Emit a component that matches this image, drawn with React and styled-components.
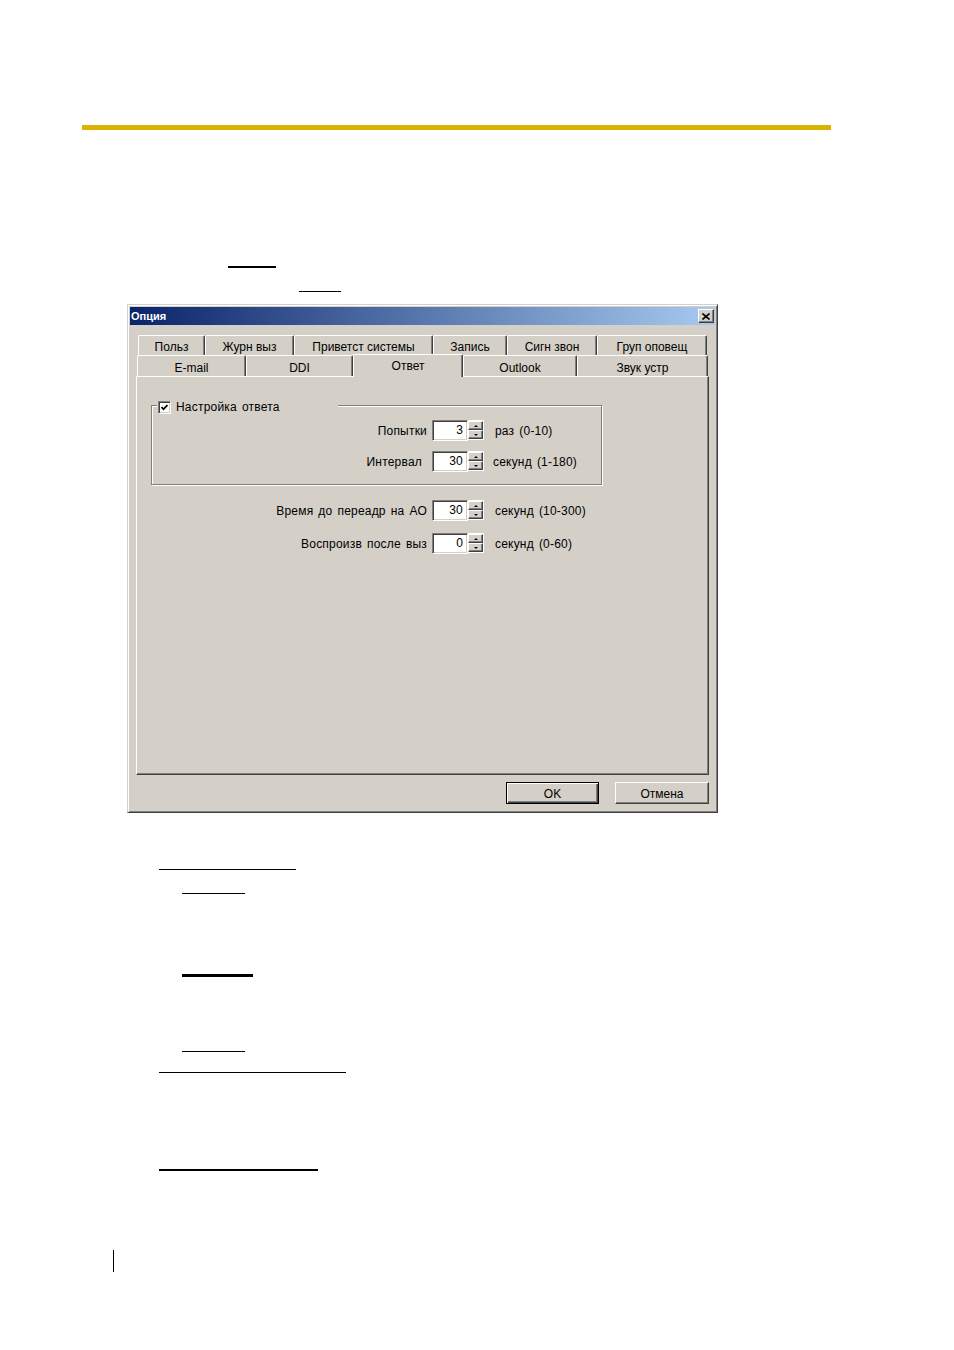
import React from 'react';
import styled, { createGlobalStyle, css } from 'styled-components';

const GlobalStyle = createGlobalStyle`
  body {
    margin: 0;
    background: #fff;
  }
`;

const Page = styled.div`
  width: 954px;
  min-height: 1350px;
  box-sizing: border-box;
  padding-top: 125px;
  background: #fff;
  display: flex;
  flex-direction: column;
  align-items: flex-start;
`;

const HeadRule = styled.div`
  margin-left: 82px;
  width: 749px;
  height: 5px;
  background: #dcb300;
`;

// blanked-out fields of the manual page, drawn as plain rules
const Blank = styled.span`
  display: block;
  margin-left: ${(p) => p.$x}px;
  margin-top: ${(p) => p.$gap}px;
  width: ${(p) => p.$w}px;
  height: ${(p) => p.$h || 1}px;
  background: #000;
`;

/* ---------- dialog ---------- */

const Window = styled.div`
  margin-left: 127px;
  margin-top: 12px;
  width: 591px;
  height: 509px;
  box-sizing: border-box;
  padding: 2px;
  background: #d4d0c8;
  border: 1px solid;
  border-color: #d4d0c8 #404040 #404040 #d4d0c8;
  box-shadow: inset 1px 1px #fff, inset -1px -1px #808080;
  display: flex;
  flex-direction: column;
  font-family: "Liberation Sans", Arial, sans-serif;
  font-size: 12px;
  color: #000;
`;

const TitleBar = styled.div`
  height: 18px;
  flex-shrink: 0;
  padding: 0 1px 0 1px;
  display: flex;
  align-items: center;
  justify-content: space-between;
  background: linear-gradient(to right, #0a246a, #a6caf0);
`;

const Title = styled.span`
  font-weight: bold;
  font-size: 11px;
  color: #fff;
`;

const CloseButton = styled.div`
  width: 16px;
  height: 14px;
  box-sizing: border-box;
  background: #d4d0c8;
  border: 1px solid;
  border-color: #fff #404040 #404040 #fff;
  box-shadow: inset -1px -1px #808080;
  display: flex;
  align-items: center;
  justify-content: center;
`;

const Body = styled.div`
  padding: 10px 6px 0 6px;
  display: flex;
  flex-direction: column;
`;

const TabRow = styled.div`
  display: flex;
  align-items: flex-start;
  height: ${(p) => p.$h}px;
  margin-left: ${(p) => p.$x}px;
`;

const Tab = styled.div`
  box-sizing: border-box;
  width: ${(p) => p.$w}px;
  height: 100%;
  padding-top: ${(p) => p.$top}px;
  line-height: 14px;
  text-align: center;
  white-space: nowrap;
  background: #d4d0c8;
  border-top: 1px solid #fff;
  border-left: 1px solid #fff;
  border-right: 1px solid #404040;
  border-radius: 2px 2px 0 0;
  box-shadow: inset -1px 0 #808080;

  ${(p) =>
    p.$selected &&
    css`
      position: relative;
      z-index: 1;
      height: calc(100% + 2px);
      margin-top: -1px;
      padding-top: 4px;
    `}
`;

const Panel = styled.div`
  height: 399px;
  box-sizing: border-box;
  padding: 28px 0 0 14px;
  border: 1px solid;
  border-color: #fff #404040 #404040 #fff;
  box-shadow: inset -1px -1px #808080;
  display: flex;
  flex-direction: column;
  align-items: flex-start;
  letter-spacing: 0.2px;
  word-spacing: 1.5px;
`;

const Group = styled.div`
  position: relative;
  width: 451px;
  box-sizing: border-box;
  padding: 14px 0 12px 0;
  border: 1px solid #808080;
  box-shadow: inset 1px 1px #fff, 1px 1px #fff;
  display: flex;
  flex-direction: column;
  gap: 10px;
`;

const Legend = styled.div`
  position: absolute;
  top: -6px;
  left: 5px;
  width: 180px;
  height: 14px;
  padding-left: 1px;
  background: #d4d0c8;
  display: flex;
  align-items: center;
  gap: 5px;
`;

const CheckBox = styled.span`
  width: 13px;
  height: 13px;
  box-sizing: border-box;
  background: #fff;
  border: 1px solid;
  border-color: #808080 #fff #fff #808080;
  box-shadow: inset 1px 1px #404040, inset -1px -1px #d4d0c8;
  display: flex;
  align-items: center;
  justify-content: center;
`;

const Rows = styled.div`
  margin-top: 15px;
  padding-left: 1px;
  display: flex;
  flex-direction: column;
  gap: 12px;
`;

const Row = styled.div`
  display: flex;
  align-items: center;
  height: 21px;
`;

const Label = styled.span`
  width: 275px;
  text-align: right;
  white-space: nowrap;
`;

const SpinBox = styled.div`
  margin-left: 5px;
  display: flex;
  height: 21px;
`;

const Field = styled.div`
  width: 36px;
  height: 21px;
  box-sizing: border-box;
  padding-right: 4px;
  background: #fff;
  border: 1px solid;
  border-color: #808080 #fff #fff #808080;
  box-shadow: inset 1px 1px #404040, inset -1px -1px #d4d0c8;
  text-align: right;
  line-height: 19px;
`;

const Spinner = styled.div`
  width: 16px;
  height: 21px;
  box-sizing: border-box;
  padding: 1px 1px 1px 0;
  background: #fff;
  border-bottom: 1px solid #d4d0c8;
  display: flex;
  flex-direction: column;
`;

const SpinButton = styled.div`
  flex: 1;
  box-sizing: border-box;
  background: #d4d0c8;
  border: 1px solid;
  border-color: #fff #404040 #404040 #fff;
  box-shadow: inset -1px -1px #808080;
  display: flex;
  align-items: center;
  justify-content: center;

  &::after {
    content: "";
    border-left: 2px solid transparent;
    border-right: 2px solid transparent;
    ${(p) =>
      p.$down
        ? css`border-top: 2px solid #000;`
        : css`border-bottom: 2px solid #000;`}
  }
`;

const Unit = styled.span`
  margin-left: ${(p) => p.$gap || 11}px;
  white-space: nowrap;
`;

const ButtonBar = styled.div`
  margin-top: 7px;
  display: flex;
  justify-content: flex-end;
  gap: 16px;
`;

const Button = styled.button`
  width: ${(p) => p.$w}px;
  height: 22px;
  box-sizing: border-box;
  padding: 2px 0 0 0;
  background: #d4d0c8;
  font-family: "Liberation Sans", Arial, sans-serif;
  font-size: 12px;
  color: #000;
  border: 1px solid;
  border-color: #fff #404040 #404040 #fff;
  box-shadow: inset -1px -1px #808080;

  ${(p) =>
    p.$default &&
    css`
      border-color: #000;
      box-shadow: inset 1px 1px #fff, inset -1px -1px #404040,
        inset -2px -2px #808080;
    `}
`;

const topTabs = [
  ['Польз', 67],
  ['Журн выз', 89],
  ['Приветст системы', 139],
  ['Запись', 74],
  ['Сигн звон', 90],
  ['Груп оповещ', 110],
];

const bottomTabs = [
  ['E-mail', 109],
  ['DDI', 107],
  ['Ответ', 110, true],
  ['Outlook', 114],
  ['Звук устр', 131],
];

function Spin({ value }) {
  return (
    <SpinBox>
      <Field>{value}</Field>
      <Spinner>
        <SpinButton />
        <SpinButton $down />
      </Spinner>
    </SpinBox>
  );
}

function OptionsDialog() {
  return (
    <Window>
      <TitleBar>
        <Title>Опция</Title>
        <CloseButton>
          <svg width="8" height="7" viewBox="0 0 8 7">
            <path d="M0.5 0.5 L7.5 6.5 M7.5 0.5 L0.5 6.5" stroke="#000" strokeWidth="1.6" />
          </svg>
        </CloseButton>
      </TitleBar>

      <Body>
        <TabRow $h={20} $x={2}>
          {topTabs.map(([name, w]) => (
            <Tab key={name} $w={w} $top={4}>
              {name}
            </Tab>
          ))}
        </TabRow>
        <TabRow $h={21} $x={1}>
          {bottomTabs.map(([name, w, sel]) => (
            <Tab key={name} $w={w} $top={5} $selected={sel}>
              {name}
            </Tab>
          ))}
        </TabRow>

        <Panel>
          <Group>
            <Legend>
              <CheckBox>
                <svg width="7" height="7" viewBox="0 0 7 7">
                  <path d="M0.5 3 L2.5 5.2 L6.5 1" fill="none" stroke="#000" strokeWidth="1.7" />
                </svg>
              </CheckBox>
              Настройка ответа
            </Legend>
            <Row>
              <Label>Попытки</Label>
              <Spin value="3" />
              <Unit>раз (0-10)</Unit>
            </Row>
            <Row>
              <Label>Интервал&nbsp;</Label>
              <Spin value="30" />
              <Unit $gap={9}>секунд (1-180)</Unit>
            </Row>
          </Group>

          <Rows>
            <Row>
              <Label>Время до переадр на АО</Label>
              <Spin value="30" />
              <Unit>секунд (10-300)</Unit>
            </Row>
            <Row>
              <Label>Воспроизв после выз</Label>
              <Spin value="0" />
              <Unit>секунд (0-60)</Unit>
            </Row>
          </Rows>
        </Panel>

        <ButtonBar>
          <Button $w={93} $default>OK</Button>
          <Button $w={94}>Отмена</Button>
        </ButtonBar>
      </Body>
    </Window>
  );
}

export default function App() {
  return (
    <>
      <GlobalStyle />
      <Page>
        <HeadRule />
        <Blank $x={228} $gap={136} $w={48} $h={2} />
        <Blank $x={299} $gap={23} $w={42} />
        <OptionsDialog />
        <Blank $x={159} $gap={56} $w={137} />
        <Blank $x={182} $gap={23} $w={63} />
        <Blank $x={182} $gap={80} $w={71} $h={3} />
        <Blank $x={182} $gap={74} $w={63} />
        <Blank $x={159} $gap={20} $w={187} />
        <Blank $x={159} $gap={96} $w={159} $h={2} />
        <Blank $x={113} $gap={79} $w={1} $h={22} />
      </Page>
    </>
  );
}
